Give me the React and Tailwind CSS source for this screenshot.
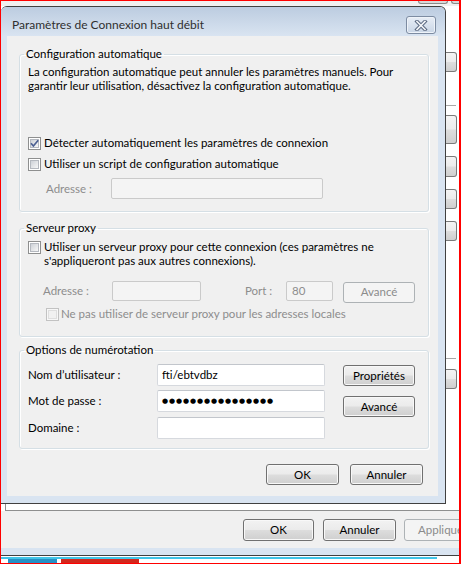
import React from "react";

const FONT = "font-['Lato','Noto_Sans',sans-serif]";

function Checkbox({ checked = false, disabled = false }) {
  return (
    <span
      className={
        disabled
          ? "relative flex h-[13px] w-[13px] shrink-0 items-center justify-center border border-[#c2c2c2] bg-[#f7f7f7]"
          : "relative flex h-[13px] w-[13px] shrink-0 items-center justify-center border border-[#8e8f8f] bg-white"
      }
    >
      <span
        className={
          disabled
            ? "h-[9px] w-[9px] border border-[#dedede] bg-[#f1f1f1]"
            : "h-[9px] w-[9px] border border-[#b4b8bf] bg-[linear-gradient(135deg,#cdd1d7,#f7f7f7)]"
        }
      />
      {checked && (
        <svg className="absolute left-0 top-0" width="11" height="11" viewBox="0 0 11 11">
          <path d="M2 5.2 L4.4 8 L9.2 2.2" fill="none" stroke="#4b5f92" strokeWidth="1.7" />
        </svg>
      )}
    </span>
  );
}

function Button({ children, className = "", disabled = false }) {
  return (
    <div
      className={
        (disabled
          ? "flex shrink-0 items-center justify-center rounded-[3px] border border-[#adb2b5] bg-[#f4f4f4] text-[#8b8b8b] "
          : "flex shrink-0 items-center justify-center rounded-[3px] border border-[#707070] bg-[linear-gradient(#f2f2f2_0%,#ebebeb_48%,#dddddd_52%,#cfcfcf_100%)] text-black shadow-[inset_0_0_0_1px_#f8f8f8] ") +
        className
      }
    >
      {children}
    </div>
  );
}

function Input({ className = "", disabled = false, children }) {
  return (
    <div
      className={
        (disabled
          ? "flex shrink-0 items-center rounded-[2px] border border-[#cacaca] bg-[#f4f4f4] px-[5px] text-[#8d8d8d] "
          : "flex shrink-0 items-center rounded-[2px] border border-[#d6d9de] border-t-[#c2c6cc] bg-white px-[4px] text-black ") +
        className
      }
    >
      {children}
    </div>
  );
}

function StripBtn({ className = "" }) {
  return (
    <div
      className={
        "w-[11px] shrink-0 rounded-r-[3px] border-y border-r border-[#7a7a7a] bg-[linear-gradient(#f4f4f4_0%,#ececec_48%,#dddddd_52%,#cfcfcf_100%)] " +
        className
      }
    />
  );
}

export default function App() {
  return (
    <div
      className={`${FONT} flex h-[564px] w-[461px] flex-col overflow-hidden border-t border-b border-l border-r-2 border-[#ff0000] bg-white text-[11.5px] leading-[14px] text-black`}
    >
      {/* top strip of parent window */}
      <div className="flex h-[5px] shrink-0 bg-[#f0f0f0]">
        <div className="ml-[417px] h-[3px] w-[30px] rounded-b-[3px] border-x border-b border-[#8a8a8a] bg-[#d8d8d8]" />
        <div className="ml-[3px] h-[3px] flex-1 rounded-bl-[3px] border-b border-l border-[#8a8a8a] bg-[#d8d8d8]" />
      </div>

      {/* main row */}
      <div className="flex h-[498px] shrink-0">
        {/* dialog */}
        <div className="flex w-[445px] shrink-0 flex-col overflow-hidden rounded-t-[6px] border-t border-r border-b border-[#404040] bg-[#d9e4f1]">
          {/* title bar */}
          <div className="flex h-[29px] shrink-0 items-start bg-[linear-gradient(#bccce0,#d9e4f1)]">
            <span className="ml-[11px] mt-[11px] text-[12px] text-[#2f2f2f]">Paramètres de Connexion haut débit</span>
            <div className="ml-auto mr-[9px] mt-[9px] flex h-[18px] w-[30px] items-center justify-center rounded-[3px] border border-[#7d8ca2] bg-[linear-gradient(#e8eef6,#c9d6e6)] shadow-[inset_0_0_0_1px_#eef3f9]">
              <svg width="14" height="11" viewBox="0 0 14 11">
                <path d="M3 1.5 L11 9.5 M11 1.5 L3 9.5" stroke="#5a6880" strokeWidth="3.6" strokeLinecap="square" />
                <path d="M3 1.5 L11 9.5 M11 1.5 L3 9.5" stroke="#f4f6f9" strokeWidth="1.6" strokeLinecap="square" />
              </svg>
            </div>
          </div>

          {/* body */}
          <div className="flex h-[460px] shrink-0">
            <div className="ml-[6px] flex w-[431px] shrink-0 flex-col bg-[#f0f0f0]">
              {/* Group 1 */}
              <fieldset className="ml-[12px] mt-[11px] w-[410px] rounded-[3px] border border-[#d5dfe5] p-0 shadow-[inset_1px_1px_0_#ffffff,1px_1px_0_#ffffff]">
                <legend className="ml-[4px] px-[2px] leading-[14px]">Configuration automatique</legend>
                <div className="flex flex-col pb-[12px] pl-[8px]">
                  <p className="mt-[4px] whitespace-nowrap">
                    La configuration automatique peut annuler les paramètres manuels. Pour
                    <br />
                    garantir leur utilisation, désactivez la configuration automatique.
                  </p>
                  <div className="mt-[43px] flex h-[14px] items-center gap-[3px]">
                    <Checkbox checked />
                    <span>Détecter automatiquement les paramètres de connexion</span>
                  </div>
                  <div className="mt-[7px] flex h-[14px] items-center gap-[3px]">
                    <Checkbox />
                    <span>Utiliser un script de configuration automatique</span>
                  </div>
                  <div className="mt-[7px] flex h-[21px] items-center">
                    <span className="ml-[18px] w-[65px] text-[#8d8d8d]">Adresse :</span>
                    <Input disabled className="h-[21px] w-[212px]" />
                  </div>
                </div>
              </fieldset>

              {/* Group 2 */}
              <fieldset className="ml-[12px] mt-[9px] w-[410px] rounded-[3px] border border-[#d5dfe5] p-0 shadow-[inset_1px_1px_0_#ffffff,1px_1px_0_#ffffff]">
                <legend className="ml-[4px] px-[2px] leading-[14px]">Serveur proxy</legend>
                <div className="flex flex-col pb-[15px] pl-[8px]">
                  <div className="mt-[5px] flex items-start gap-[3px]">
                    <span className="mt-[1px]">
                      <Checkbox />
                    </span>
                    <p className="whitespace-nowrap">
                      Utiliser un serveur proxy pour cette connexion (ces paramètres ne
                      <br />
                      s'appliqueront pas aux autres connexions).
                    </p>
                  </div>
                  <div className="mt-[12px] flex h-[22px] items-center">
                    <span className="ml-[15px] w-[69px] text-[#8d8d8d]">Adresse :</span>
                    <Input disabled className="h-[20px] w-[89px]" />
                    <span className="ml-[44px] w-[41px] text-[#8d8d8d]">Port :</span>
                    <Input disabled className="h-[20px] w-[47px]">
                      80
                    </Input>
                    <Button disabled className="ml-[10px] mt-[2px] h-[21px] w-[72px]">
                      Avancé
                    </Button>
                  </div>
                  <div className="mt-[5px] flex h-[14px] items-center gap-[2px]">
                    <span className="ml-[18px]">
                      <Checkbox disabled />
                    </span>
                    <span className="text-[#8d8d8d]">Ne pas utiliser de serveur proxy pour les adresses locales</span>
                  </div>
                </div>
              </fieldset>

              {/* Group 3 */}
              <fieldset className="ml-[12px] mt-[6px] w-[410px] rounded-[3px] border border-[#d5dfe5] p-0 shadow-[inset_1px_1px_0_#ffffff,1px_1px_0_#ffffff]">
                <legend className="ml-[4px] px-[2px] leading-[14px]">Options de numérotation</legend>
                <div className="flex pb-[9px] pl-[8px]">
                  <div className="flex flex-col">
                    <div className="mt-[7px] flex h-[22px] items-center">
                      <span className="w-[129px]">Nom d’utilisateur :</span>
                      <Input className="h-[22px] w-[168px]">fti/ebtvdbz</Input>
                    </div>
                    <div className="mt-[4px] flex h-[22px] items-center">
                      <span className="w-[129px]">Mot de passe :</span>
                      <Input className="h-[22px] w-[168px]">
                        <span className="font-['DejaVu_Sans',sans-serif] text-[7px] tracking-[0.9px]">●●●●●●●●●●●●●●●●</span>
                      </Input>
                    </div>
                    <div className="mt-[5px] flex h-[22px] items-center">
                      <span className="w-[129px]">Domaine :</span>
                      <Input className="h-[22px] w-[168px]" />
                    </div>
                  </div>
                  <div className="ml-[18px] flex flex-col">
                    <Button className="mt-[8px] h-[21px] w-[72px]">Propriétés</Button>
                    <Button className="mt-[10px] h-[21px] w-[72px]">Avancé</Button>
                  </div>
                </div>
              </fieldset>

              {/* OK / Annuler */}
              <div className="mt-[15px] flex justify-end gap-[11px] pr-[15px]">
                <Button className="h-[21px] w-[73px]">OK</Button>
                <Button className="h-[21px] w-[73px]">Annuler</Button>
              </div>
            </div>
          </div>
        </div>

        {/* parent window right strip */}
        <div className="flex w-[13px] shrink-0 flex-col bg-white">
          <StripBtn className="mt-[46px] h-[20px]" />
          <div className="mt-[33px] h-px w-[10px] bg-[#a8a8a8]" />
          <StripBtn className="mt-[9px] h-[29px]" />
          <StripBtn className="mt-[12px] h-[21px]" />
          <StripBtn className="mt-[12px] h-[20px]" />
          <StripBtn className="mt-[12px] h-[20px]" />
          <div className="mt-[117px] h-px w-[10px] bg-[#a8a8a8]" />
          <StripBtn className="mt-[10px] h-[20px]" />
        </div>
      </div>

      {/* parent window bottom */}
      <div className="flex flex-1 flex-col overflow-hidden">
        <div className="ml-[4px] h-[7px] shrink-0 border-b border-l border-[#8e8f8f] bg-white" />
        <div className="flex h-[37px] shrink-0 items-start overflow-hidden bg-[#f0f0f0]">
          <Button className="ml-[242px] mt-[8px] h-[22px] w-[71px]">OK</Button>
          <Button className="ml-[9px] mt-[8px] h-[22px] w-[73px]">Annuler</Button>
          <Button disabled className="ml-[8px] mt-[8px] h-[22px] w-[73px] justify-start pl-[13px]">
            Appliquer
          </Button>
        </div>
        <div className="h-[7px] shrink-0 bg-[#d9e4f1]" />
        <div className="h-px shrink-0 bg-[#404040]" />
        <div className="h-px shrink-0 bg-white" />
        <div className="h-[2px] w-[436px] shrink-0 bg-[#3fc4e8]" />
        <div className="flex flex-1">
          <div className="ml-[7px] w-[49px] bg-[#2591c6]" />
          <div className="ml-[4px] w-[78px] bg-[#d2281d]" />
        </div>
      </div>
    </div>
  );
}
